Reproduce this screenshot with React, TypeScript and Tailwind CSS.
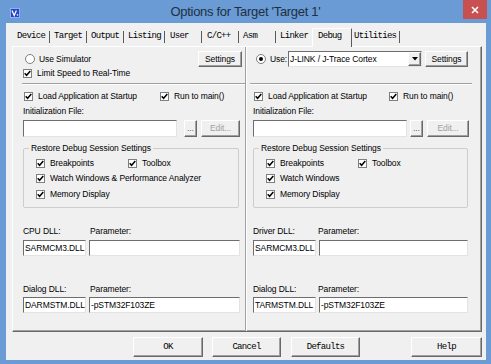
import React from 'react'

const sans =
  "font-['Liberation_Sans',Arial,sans-serif] text-[8.5px] leading-[11px] tracking-[-0.1px] text-black"
const mono = "font-['Liberation_Mono','Courier_New',monospace] text-[9px] tracking-[-0.7px] text-black"

const sunken =
  'bg-white border border-t-[#6d6d6d] border-l-[#6d6d6d] border-r-[#e3e3e3] border-b-[#e3e3e3]'
const raised =
  'bg-[#f0f0f0] border border-t-white border-l-white border-r-[#696969] border-b-[#696969] shadow-[inset_-1px_-1px_0_#a0a0a0]'

function Check({ on = true }: { on?: boolean }) {
  return (
    <span className="w-[9px] h-[9px] shrink-0 bg-white border border-[#7f7f7f] flex items-center justify-center">
      {on && (
        <svg width="7" height="7" viewBox="0 0 7 7">
          <path d="M0.7 3.2 L2.6 5.3 L6.3 1" fill="none" stroke="#000" strokeWidth="1.5" />
        </svg>
      )}
    </span>
  )
}

function Radio({ on = false }: { on?: boolean }) {
  return (
    <span className="w-[10px] h-[10px] shrink-0 rounded-full bg-white border border-[#7f7f7f] flex items-center justify-center">
      {on && <span className="w-[4px] h-[4px] rounded-full bg-black" />}
    </span>
  )
}

function CheckItem({ label, cell = '' }: { label: string; cell?: string }) {
  return (
    <div className={`flex items-center gap-[5px] whitespace-nowrap ${cell}`}>
      <Check />
      <span>{label}</span>
    </div>
  )
}

function Field({ className, text = '' }: { className: string; text?: string }) {
  return (
    <div className={`h-[16px] pl-[1px] flex items-center whitespace-nowrap overflow-hidden ${sunken} ${className}`}>
      {text}
    </div>
  )
}

function Btn({
  className,
  children,
  disabled = false,
}: {
  className: string
  children: React.ReactNode
  disabled?: boolean
}) {
  return (
    <div
      className={`flex items-center justify-center ${raised} ${disabled ? 'text-[#a0a0a0]' : ''} ${className}`}
    >
      {children}
    </div>
  )
}

function Separator({ className }: { className: string }) {
  return <div className={`h-[2px] border-t border-t-[#a0a0a0] border-b border-b-white ${className}`} />
}

type SideProps = {
  top: React.ReactNode
  pad: string
  run: string
  initW: string
  dotsGap: string
  editW: string
  groupW: string
  watch: string
  dllLabel: string
  labelCell: string
  paramW: string
  dll1: string
  dll2: string
}

function Side(p: SideProps) {
  return (
    <div className={`flex flex-col pt-[4px] ${p.pad}`}>
      {p.top}
      <div className="mt-[6px] h-[11px] flex items-center ml-[1px]">
        <CheckItem label="Load Application at Startup" cell={p.run} />
        <CheckItem label="Run to main()" />
      </div>
      <div className="mt-[4px]">Initialization File:</div>
      <div className="mt-[3px] flex items-center">
        <Field className={`${p.initW} h-[17px]`} />
        <Btn className={`${p.dotsGap} w-[13px] h-[17px] text-[#606060]`}>...</Btn>
        <Btn className={`ml-[4px] ${p.editW} h-[17px]`} disabled>
          Edit...
        </Btn>
      </div>
      <div className={`mt-[11px] h-[60px] ${p.groupW} border border-[#cdcdcd] rounded-[2px] flex flex-col`}>
        <span className="-mt-[6px] ml-[5px] px-[2px] bg-[#f0f0f0] self-start">Restore Debug Session Settings</span>
        <div className="mt-[4px] pl-[12px] flex flex-col gap-[4px]">
          <div className="flex items-center h-[11px]">
            <CheckItem label="Breakpoints" cell="w-[92px]" />
            <CheckItem label="Toolbox" />
          </div>
          <div className="flex items-center h-[11px]">
            <CheckItem label={p.watch} />
          </div>
          <div className="flex items-center h-[11px] mt-[1px]">
            <CheckItem label="Memory Display" />
          </div>
        </div>
      </div>
      <div className="mt-[18px] flex">
        <span className={p.labelCell}>{p.dllLabel}</span>
        <span>Parameter:</span>
      </div>
      <div className="mt-[3px] flex gap-[3px]">
        <Field className="w-[63px]" text={p.dll1} />
        <Field className={p.paramW} />
      </div>
      <div className="mt-[28px] flex">
        <span className={p.labelCell}>Dialog DLL:</span>
        <span>Parameter:</span>
      </div>
      <div className="mt-[2px] flex gap-[3px]">
        <Field className="w-[63px]" text={p.dll2} />
        <Field className={p.paramW} text="-pSTM32F103ZE" />
      </div>
    </div>
  )
}

const tabs = [
  { label: 'Device', w: 'w-[36px] pl-[4px]' },
  { label: 'Target', w: 'w-[36px] pl-[4px]' },
  { label: 'Output', w: 'w-[36px] pl-[4px]' },
  { label: 'Listing', w: 'w-[40px] pl-[4px]' },
  { label: 'User', w: 'w-[36px] pl-[5px]' },
  { label: 'C/C++', w: 'w-[36px] pl-[5px]' },
  { label: 'Asm', w: 'w-[36px] pl-[4px]' },
]

export default function App() {
  return (
    <div className={`w-[491px] h-[364px] bg-[#6a9bd4] flex flex-col overflow-hidden ${sans}`}>
      {/* title bar */}
      <div className="h-[23px] grid grid-cols-[1fr_auto_1fr] items-start">
        <div className="pl-[10px] pt-[8px]">
          <svg width="10" height="10" viewBox="0 0 10 10">
            <rect x="0" y="0" width="10" height="10" fill="#2743c8" />
            <rect x="0.5" y="0.5" width="9" height="9" fill="none" stroke="#8fb0f0" />
            <path d="M2 2.5 L4.2 7.5 L6.4 2.5" fill="none" stroke="#fff" strokeWidth="1.3" />
            <rect x="6.8" y="6.2" width="1.4" height="1.4" fill="#fff" />
          </svg>
        </div>
        <div className="pt-[3px] font-['Liberation_Sans',Arial,sans-serif] text-[13px] leading-[17px] tracking-[-0.3px] text-[#1e2f44]">
          Options for Target 'Target 1'
        </div>
        <div className="flex justify-end">
          <div className="w-[24px] h-[19px] mr-[4px] bg-[#c75050] flex items-center justify-center">
            <svg width="8" height="8" viewBox="0 0 8 8">
              <path d="M1 1 L7 7 M7 1 L1 7" stroke="#fff" strokeWidth="1.6" />
            </svg>
          </div>
        </div>
      </div>

      {/* client area */}
      <div className="flex-1 ml-[6px] mr-[5px] mb-[4px] bg-[#f0f0f0] flex flex-col">
        {/* tabs */}
        <div className={`h-[23px] pl-[7px] flex items-end ${mono}`}>
          {tabs.map((t) => (
            <div key={t.label} className="flex items-center h-[17px] pb-[2px]">
              <span className={`${t.w} whitespace-nowrap`}>{t.label}</span>
              <span className="w-px h-[12px] bg-[#5a5a5a]" />
            </div>
          ))}
          <div className="flex items-center h-[17px] pb-[2px]">
            <span className="w-[36px] pl-[4px]">Linker</span>
          </div>
          <div className="relative z-10 -mb-px h-[19px] w-[40px] pl-[5px] pb-[4px] flex items-center bg-[#f0f0f0] border-t border-l border-white border-r border-r-[#5a5a5a]">
            Debug
          </div>
          <div className="flex items-center h-[17px] pb-[2px]">
            <span className="w-[47px] pl-[2px]">Utilities</span>
            <span className="w-px h-[12px] bg-[#5a5a5a]" />
          </div>
        </div>

        {/* tab page */}
        <div className="h-[286px] ml-[6px] mr-[4px] flex border-t border-l border-white border-r border-b border-r-[#696969] border-b-[#696969] shadow-[inset_-1px_-1px_0_#a0a0a0]">
          <div className="w-[232px]">
            <Side
              pad="pl-[10px] pr-[5px]"
              top={
                <>
                  <div className="h-[16px] flex items-center justify-between -mr-[2px]">
                    <div className="flex items-center gap-[4px] ml-[2px]">
                      <Radio />
                      <span>Use Simulator</span>
                    </div>
                    <Btn className="w-[44px] h-[16px]">Settings</Btn>
                  </div>
                  <div className="mt-[1px] h-[11px] flex items-center">
                    <CheckItem label="Limit Speed to Real-Time" />
                  </div>
                  <Separator className="mt-[4px] -ml-[1px] -mr-[5px]" />
                </>
              }
              run="w-[136px]"
              initW="w-[154px]"
              dotsGap="ml-[7px]"
              editW="w-[39px]"
              groupW="w-[216px]"
              watch="Watch Windows & Performance Analyzer"
              dllLabel="CPU DLL:"
              labelCell="w-[67px]"
              paramW="w-[151px]"
              dll1="SARMCM3.DLL"
              dll2="DARMSTM.DLL"
            />
          </div>
          <div className="w-[2px] border-l border-l-[#a0a0a0] border-r border-r-white" />
          <div className="flex-1">
            <Side
              pad="pl-[6px] pr-[13px]"
              top={
                <>
                  <div className="h-[16px] flex items-center">
                    <div className="w-[35px] flex items-center gap-[4px] pl-[3px]">
                      <Radio on />
                      <span>Use:</span>
                    </div>
                    <div className={`w-[134px] h-[16px] flex items-center ${sunken}`}>
                      <span className="flex-1 pl-[1px] whitespace-nowrap">J-LINK / J-Trace Cortex</span>
                      <span className={`w-[13px] h-[14px] flex items-center justify-center ${raised}`}>
                        <svg width="6" height="4" viewBox="0 0 6 4">
                          <path d="M0 0 H6 L3 3.5 Z" fill="#000" />
                        </svg>
                      </span>
                    </div>
                    <Btn className="ml-[3px] w-[43px] h-[16px]">Settings</Btn>
                  </div>
                  <Separator className="mt-[16px] -ml-[3px] -mr-[3px]" />
                </>
              }
              run="w-[135px]"
              initW="w-[154px]"
              dotsGap="ml-[3px]"
              editW="w-[42px]"
              groupW="w-[215px]"
              watch="Watch Windows"
              dllLabel="Driver DLL:"
              labelCell="w-[65px]"
              paramW="w-[149px]"
              dll1="SARMCM3.DLL"
              dll2="TARMSTM.DLL"
            />
          </div>
        </div>

        {/* buttons */}
        <div className={`h-[28px] pt-[5px] flex items-start ${mono}`}>
          <Btn className="ml-[127px] w-[70px] h-[20px] border-[#3c3c3c]">OK</Btn>
          <Btn className="ml-[9px] w-[69px] h-[20px]">Cancel</Btn>
          <Btn className="ml-[10px] w-[69px] h-[20px]">Defaults</Btn>
          <Btn className="ml-[51px] w-[71px] h-[20px]">Help</Btn>
        </div>
      </div>
    </div>
  )
}
